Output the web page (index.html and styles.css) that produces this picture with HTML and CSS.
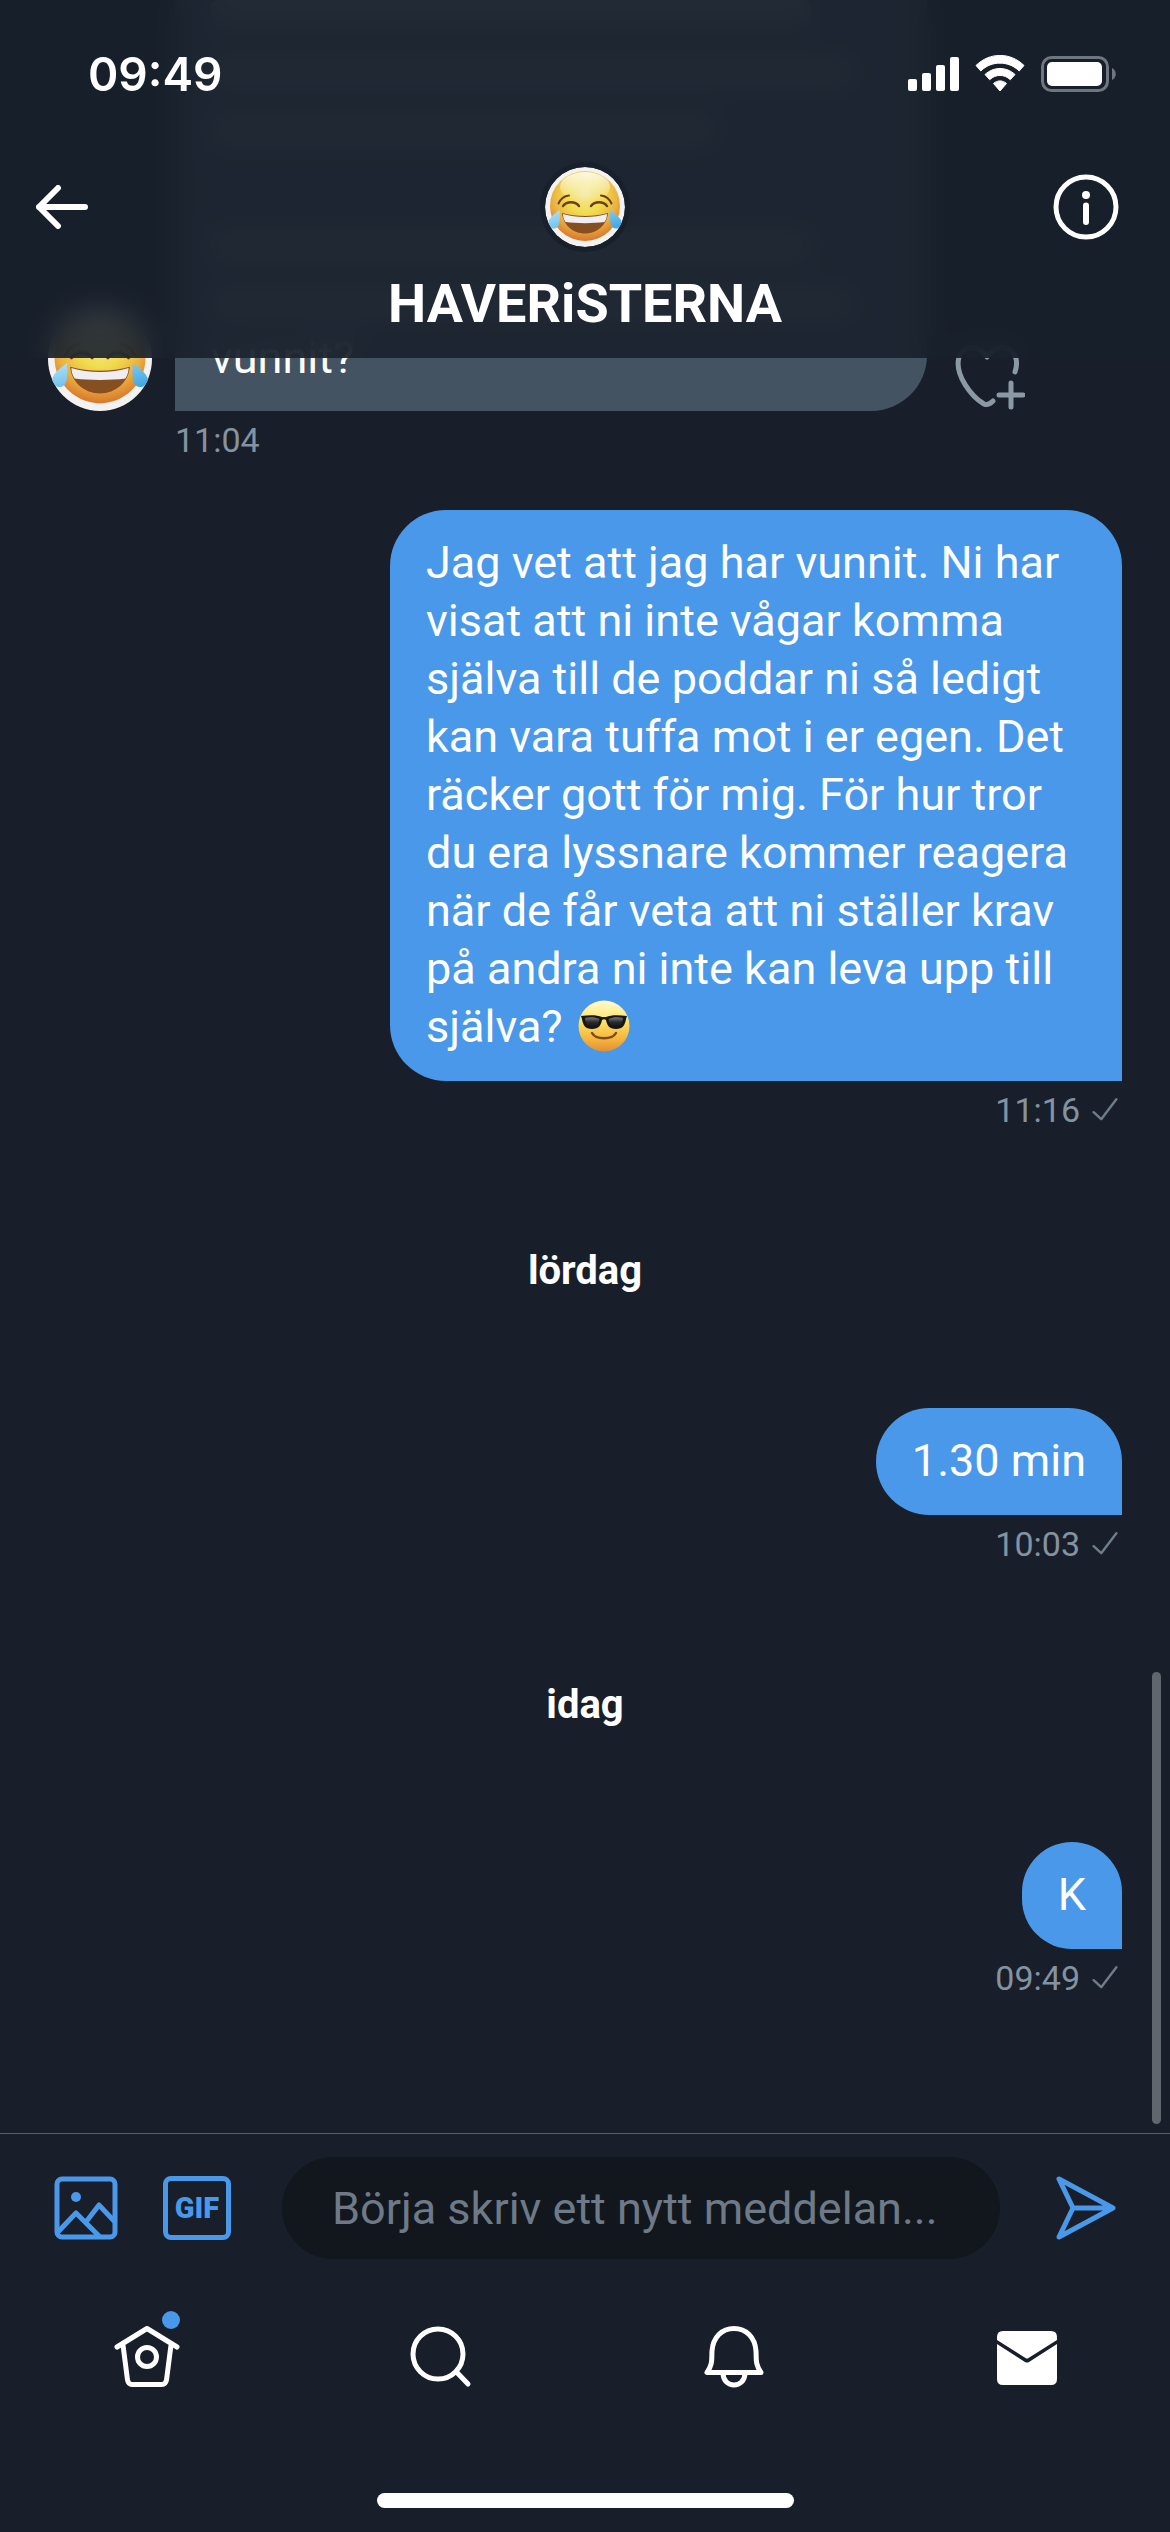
FILE: index.html
```html
<!DOCTYPE html>
<html lang="sv">
<head>
<meta charset="utf-8">
<meta name="viewport" content="width=device-width, initial-scale=1">
<title>HAVERiSTERNA</title>
<link rel="stylesheet" href="styles.css">
</head>
<body>
<svg class="defs" aria-hidden="true">
  <defs>
    <radialGradient id="face" cx="50%" cy="34%" r="66%">
      <stop offset="0" stop-color="#f3e79a"/>
      <stop offset=".4" stop-color="#f1dc4e"/>
      <stop offset=".72" stop-color="#ebb040"/>
      <stop offset="1" stop-color="#d9762c"/>
    </radialGradient>
    <linearGradient id="gloss" x1="0" y1="0" x2="0" y2="1">
      <stop offset="0" stop-color="#fff" stop-opacity=".85"/>
      <stop offset="1" stop-color="#fff" stop-opacity="0"/>
    </linearGradient>
    <linearGradient id="tear" x1="0" y1="0" x2="1" y2="1">
      <stop offset="0" stop-color="#b5e4f8"/>
      <stop offset="1" stop-color="#3ba3e2"/>
    </linearGradient>
    <linearGradient id="cool" x1="0" y1="0" x2="0" y2="1">
      <stop offset="0" stop-color="#fffbd0"/>
      <stop offset=".4" stop-color="#fde365"/>
      <stop offset=".75" stop-color="#f6b63e"/>
      <stop offset="1" stop-color="#e18f31"/>
    </linearGradient>
    <linearGradient id="lens" x1="0" y1="0" x2="0" y2="1">
      <stop offset="0" stop-color="#77777c"/>
      <stop offset=".5" stop-color="#2a2a2c"/>
      <stop offset="1" stop-color="#151515"/>
    </linearGradient>
    <symbol id="joy" viewBox="0 0 80 80">
      <circle cx="40" cy="40" r="40" fill="#f3f2f0"/>
      <circle cx="40" cy="39" r="35" fill="url(#face)"/>
      <ellipse cx="40" cy="20" rx="25" ry="15" fill="url(#gloss)"/>
      <g fill="none" stroke="#6f3f14" stroke-linecap="round">
        <path d="M13.500 36.500C15.500 32 19.500 29 24 28.500M66.500 36.500C64.500 32 60.500 29 56 28.500" stroke-width="2"/>
        <path d="M18 39C22 34 30 34 34 39M46 39C50 34 58 34 62 39" stroke-width="2.500"/>
      </g>
      <path d="M17 46C31 50 49 50 63 46C62 58 52 66.500 40 66.500S18 58 17 46Z" fill="#864f22"/>
      <path d="M18 47C31 51 49 51 62 47C62 50 61 53 59.500 55C48 56.500 32 56.500 20.500 55C19 53 18 50 18 47Z" fill="#f1eef3"/>
      <path d="M14.500 43C15.500 51 15.500 61 9.500 61.500C6 62 4 58.500 3 55.500C5 50 10 46.500 14.500 43ZM65.500 43C64.500 51 64.500 61 70.500 61.500C74 62 76 58.500 77 55.500C75 50 70 46.500 65.500 43Z" fill="url(#tear)"/>
    </symbol>
    <symbol id="sent" viewBox="0 0 24 24">
      <path d="M1.500 14L8.500 20.500L22.500 2" fill="none" stroke="currentColor" stroke-width="2.200" stroke-linecap="round" stroke-linejoin="round"/>
    </symbol>
  </defs>
</svg>

<header class="top">
  <div class="status">
    <span class="clock">09:49</span>
    <svg class="status-icons" viewBox="0 0 208 38" role="img" aria-label="Signal, wifi och batteri">
      <g fill="#fff">
        <rect x="0" y="24" width="9" height="12" rx="2"/>
        <rect x="14" y="18" width="9" height="18" rx="2"/>
        <rect x="28" y="10" width="9" height="26" rx="2"/>
        <rect x="42" y="2" width="9" height="34" rx="2"/>
        <path d="M68 10.500C81.500-3 102.500-3 116 10.500L111.200 16C100.800 5.500 83.200 5.500 72.800 16Z" stroke="#fff" stroke-linejoin="round"/>
        <path d="M77 19.500C85.500 11.500 98.500 11.500 107 19.500L102.300 24.700C96.500 19 87.500 19 81.700 24.700Z" stroke="#fff" stroke-linejoin="round"/>
        <path d="M85.500 28.500C89.500 25 94.500 25 98.500 28.500L92 36Z" stroke="#fff" stroke-linejoin="round"/>
        <rect x="139" y="7" width="55" height="24" rx="5"/>
      </g>
      <rect x="134.500" y="2.500" width="65" height="33" rx="9" fill="none" stroke="#6f767f" stroke-width="3"/>
      <path d="M204 13C209 15 209 23 204 25Z" fill="#6f767f"/>
    </svg>
  </div>
  <div class="bar">
    <button class="icon-button" type="button" aria-label="Tillbaka">
      <svg class="back" viewBox="0 0 52 44"><path d="M49 22H3M22 3L3 22L22 41" fill="none" stroke="#fff" stroke-width="6" stroke-linecap="round" stroke-linejoin="round"/></svg>
    </button>
    <svg class="group-avatar" role="img" aria-label="Gruppbild"><use href="#joy"/></svg>
    <button class="icon-button" type="button" aria-label="Info">
      <svg class="info" viewBox="0 0 66 66"><circle cx="33" cy="33" r="30" fill="none" stroke="#fff" stroke-width="5"/><circle cx="33" cy="21" r="4" fill="#fff"/><path d="M33 31.500V48" stroke="#fff" stroke-width="6" stroke-linecap="round"/></svg>
    </button>
  </div>
  <h1 class="title">HAVERiSTERNA</h1>
</header>

<main class="thread">
  <article class="message incoming">
    <div class="row">
      <svg class="sender" role="img" aria-label="Avsändare"><use href="#joy"/></svg>
      <div class="bubble">
        <div class="veil" aria-hidden="true">
          <span class="long"></span><span class="full"></span><span class="short"></span>
          <span class="blank"></span><span class="long"></span><span class="full"></span>
        </div>
        <p>vunnit?</p>
      </div>
      <button class="icon-button" type="button" aria-label="Reagera">
        <svg class="react" viewBox="0 0 70 70" fill="none" stroke="#8b99a5" stroke-width="5" stroke-linecap="round" stroke-linejoin="round"><path d="M60 31C62 25 62 20 60.500 16C56 4 40 3 32 16C24 3 8 4 4 16C-1 34 17 56 29 63C31 64 34 64 38 60"/><path d="M56 42V66M44 54H68"/></svg>
      </button>
    </div>
    <div class="meta"><time>11:04</time></div>
  </article>

  <article class="message outgoing">
    <div class="bubble"><p>Jag vet att jag har vunnit. Ni har visat att ni inte vågar komma själva till de poddar ni så ledigt kan vara tuffa mot i er egen. Det räcker gott för mig. För hur tror du era lyssnare kommer reagera när de får veta att ni ställer krav på andra ni inte kan leva upp till själva? <svg class="emoji" viewBox="0 0 52 52" role="img" aria-label="Ansikte med solglasögon"><circle cx="26" cy="26" r="25.500" fill="url(#cool)"/><path d="M14 33C18 40 34 40 38 33" fill="none" stroke="#7a4a16" stroke-width="2.500" stroke-linecap="round"/><path d="M3 16C12 15 19 15 24 17H28C33 15 40 15 49 16L48 19C47 25 45 29 38 29C31 29 29 25 28 20Q26 18.500 24 20C23 25 21 29 14 29C7 29 5 25 4 19Z" fill="#161616"/><path d="M7 18C12 17 17 17 21.500 19C21 24 19 27 14 27C9 27 7.500 23 7 18ZM45 18C40 17 35 17 30.500 19C31 24 33 27 38 27C43 27 44.500 23 45 18Z" fill="url(#lens)"/></svg></p></div>
    <div class="meta"><time>11:16</time><svg class="sent" role="img" aria-label="Skickat"><use href="#sent"/></svg></div>
  </article>

  <h2 class="day">lördag</h2>

  <article class="message outgoing">
    <div class="bubble"><p>1.30 min</p></div>
    <div class="meta"><time>10:03</time><svg class="sent" role="img" aria-label="Skickat"><use href="#sent"/></svg></div>
  </article>

  <h2 class="day">idag</h2>

  <article class="message outgoing">
    <div class="bubble"><p>K</p></div>
    <div class="meta"><time>09:49</time><svg class="sent" role="img" aria-label="Skickat"><use href="#sent"/></svg></div>
  </article>
  <div class="scrollbar" aria-hidden="true"></div>
</main>

<footer class="bottom">
  <form class="composer">
    <button class="icon-button" type="button" aria-label="Lägg till bild">
      <svg class="photo" viewBox="0 0 64 64" fill="none" stroke="#4998e9" stroke-width="5"><rect x="3" y="3" width="58" height="58" rx="5"/><path d="M3 57L22 37L46 61M32 46L45 29L61 46" stroke-linejoin="round"/><circle cx="22" cy="21" r="5" fill="#4998e9" stroke="none"/></svg>
    </button>
    <button class="gif" type="button">GIF</button>
    <input class="field" type="text" aria-label="Meddelande" placeholder="Börja skriv ett nytt meddelan...">
    <button class="icon-button" type="submit" aria-label="Skicka">
      <svg class="send" viewBox="0 0 60 64" fill="none" stroke="#4998e9" stroke-width="5" stroke-linejoin="round"><path d="M3 3L57 32L3 61L17 32ZM17 32H57"/></svg>
    </button>
  </form>
  <nav class="tabs">
    <a class="tab" href="#hem" aria-label="Hem">
      <svg viewBox="0 0 66 66" fill="none" stroke="#fff" stroke-width="5" stroke-linecap="round" stroke-linejoin="round"><path d="M3 24L33 5.500L63 24M9 22L13.500 57Q14.500 61.500 18 61.500H48Q51.500 61.500 52.500 57L57 22"/><circle cx="33" cy="34" r="9.500"/></svg>
      <span class="dot"></span>
    </a>
    <a class="tab" href="#sok" aria-label="Sök">
      <svg viewBox="0 0 66 66" fill="none" stroke="#fff" stroke-width="5" stroke-linecap="round"><circle cx="31" cy="31" r="25"/><path d="M49.500 49L61 61"/></svg>
    </a>
    <a class="tab" href="#notiser" aria-label="Notiser">
      <svg viewBox="0 0 66 66" fill="none" stroke="#fff" stroke-width="5" stroke-linecap="round" stroke-linejoin="round"><path d="M6 49.500H60C54 41 55.500 36 55 28C54 14 45 5.500 33 5.500S12 14 11 28C10.500 36 12 41 6 49.500ZM22 50C22 66 44 66 44 50"/></svg>
    </a>
    <a class="tab" href="#meddelanden" aria-label="Meddelanden" aria-current="page">
      <svg viewBox="0 0 66 66"><path d="M9 8H57Q63 8 63 14V17L34.500 35Q33 36 31.500 35L3 17V14Q3 8 9 8Z" fill="#fff"/><path d="M3 21L31 39Q33 40 35 39L63 21V56Q63 62 57 62H9Q3 62 3 56Z" fill="#fff"/></svg>
    </a>
  </nav>
  <div class="home-indicator"></div>
</footer>
</body>
</html>
```
FILE: styles.css
```css
* {
  box-sizing: border-box;
}

body {
  margin: 0;
  min-height: 100vh;
  display: flex;
  flex-direction: column;
  position: relative;
  background: #181f2a;
  color: #fff;
  font-family: Roboto, "Liberation Sans", sans-serif;
  font-size: 45px;
  line-height: 58px;
}

p,
h1,
h2 {
  margin: 0;
}

svg {
  display: block;
}

button {
  padding: 0;
  border: 0;
  background: none;
  color: inherit;
  font: inherit;
}

.icon-button {
  flex: none;
}

.defs {
  position: absolute;
  width: 0;
  height: 0;
}

/* Translucent header laid over the scrolled thread */
.top {
  position: absolute;
  top: 0;
  left: 0;
  right: 0;
  z-index: 2;
  padding-bottom: 24px;
  background: rgba(24, 32, 43, 0.89);
  backdrop-filter: blur(14px);
}

.status {
  display: flex;
  justify-content: space-between;
  align-items: center;
  height: 148px;
  padding: 0 54px 0 88px;
}

.clock {
  font-family: Inter, "Liberation Sans", sans-serif;
  font-size: 46px;
  font-weight: 600;
}

.status-icons {
  width: 208px;
  height: 38px;
}

.bar {
  display: flex;
  justify-content: space-between;
  align-items: center;
  height: 118px;
  padding: 0 51px 0 36px;
}

.back {
  width: 66px;
  height: 44px;
  padding-right: 14px;
}

.info {
  width: 66px;
  height: 66px;
}

.group-avatar {
  width: 80px;
  height: 80px;
  margin-left: 15px;
  border-radius: 50%;
  box-shadow: 0 0 0 5px #18202b;
}

.title {
  padding-top: 8px;
  font-size: 54px;
  line-height: 60px;
  font-weight: 700;
  text-align: center;
}

/* Thread */
.thread {
  flex: 1;
  position: relative;
  padding: 0 48px;
}

.message {
  display: flex;
  flex-direction: column;
  margin-bottom: 49px;
}

.outgoing {
  align-items: flex-end;
}

.row {
  display: flex;
  align-items: flex-end;
}

.sender {
  flex: none;
  width: 104px;
  height: 104px;
  margin-right: 23px;
}

.bubble {
  padding: 24px 36px 25px;
  border-radius: 56px 56px 0 56px;
  background: #4998e9;
}

.outgoing .bubble {
  max-width: 732px;
}

.incoming .bubble {
  width: 752px;
  margin-right: 28px;
  padding: 0 36px 24px;
  border-radius: 0 0 56px 0;
  background: #445362;
}

/* Earlier lines, seen only as a haze through the header */
.veil {
  display: flex;
  flex-direction: column;
  height: 329px;
  gap: 30px;
}

.veil span {
  height: 28px;
  border-radius: 8px;
  background: #74808c;
}

.veil .full {
  width: 640px;
}

.veil .long {
  width: 600px;
}

.veil .short {
  width: 505px;
}

.veil .blank {
  visibility: hidden;
}

.react {
  width: 70px;
  height: 70px;
}

.meta {
  display: flex;
  align-items: center;
  gap: 12px;
  margin-top: 8px;
  color: #8592a0;
  font-size: 34px;
  line-height: 42px;
}

.incoming .meta {
  padding-left: 127px;
}

.outgoing .meta {
  padding-right: 4px;
}

.sent {
  width: 26px;
  height: 26px;
  color: #6f7d8a;
}

.emoji {
  display: inline-block;
  width: 52px;
  height: 52px;
  margin-left: 4px;
  vertical-align: -10px;
}

.day {
  margin: 116px 0 113px;
  font-size: 40px;
  line-height: 48px;
  font-weight: 700;
  text-align: center;
}

.message:has(+ .day) {
  margin-bottom: 0;
}

.scrollbar {
  position: absolute;
  right: 9px;
  bottom: 9px;
  width: 9px;
  height: 452px;
  border-radius: 5px;
  background: #60666d;
}

/* Composer and tab bar */
.bottom {
  border-top: 1px solid #56636e;
  padding: 23px 0 24px;
}

.composer {
  display: flex;
  align-items: center;
  padding: 0 54px 0 54px;
}

.photo {
  width: 64px;
  height: 64px;
}

.gif {
  flex: none;
  width: 68px;
  height: 64px;
  margin: 0 51px 0 45px;
  border: 5px solid #4998e9;
  border-radius: 8px;
  color: #4998e9;
  font-size: 29px;
  line-height: 54px;
  font-weight: 900;
}

.field {
  flex: 1;
  min-width: 0;
  height: 102px;
  margin-right: 56px;
  padding: 0 50px;
  border: 0;
  border-radius: 51px;
  background: #12171e;
  color: #fff;
  font: inherit;
}

.field::placeholder {
  color: #6e7a87;
  opacity: 1;
}

.send {
  width: 60px;
  height: 64px;
}

.tabs {
  display: flex;
  justify-content: space-between;
  padding: 64px 110px 104px 114px;
}

.tab {
  position: relative;
  width: 66px;
  height: 66px;
}

.dot {
  position: absolute;
  top: -12px;
  right: 0;
  width: 18px;
  height: 18px;
  border-radius: 50%;
  background: #4998e9;
}

.home-indicator {
  width: 417px;
  height: 15px;
  margin: 0 auto;
  border-radius: 8px;
  background: #fff;
}
```
